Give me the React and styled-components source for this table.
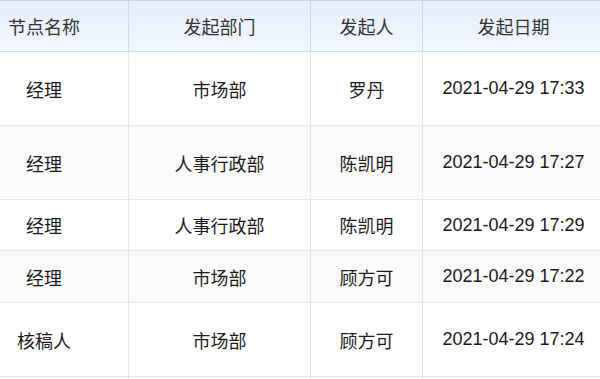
import React from 'react'
import styled, { createGlobalStyle } from 'styled-components'

const Global = createGlobalStyle`
  html, body {
    margin: 0;
    padding: 0;
    background: #fff;
    overflow: hidden;
  }
  body {
    font-family: "Liberation Sans", "Noto Sans CJK SC", sans-serif;
  }
`

const Viewport = styled.div`
  width: 600px;
  height: 379px;
  overflow: hidden;
`

const Grid = styled.div`
  display: grid;
  grid-template-columns: 169px 182px 112px 182px 160px;
  width: max-content;
  margin-left: -40px;
  border-top: 1px solid #c4d7ee;
`

const Head = styled.div`
  box-sizing: border-box;
  height: 51px;
  display: flex;
  align-items: center;
  justify-content: center;
  background: linear-gradient(to bottom, #e5eefb, #f2f7fe);
  border-right: 1px solid #c6dcf1;
  border-bottom: 1px solid #c6dcf1;
  color: #333;
  font-size: 18px;
`

const Cell = styled.div`
  box-sizing: border-box;
  height: ${p => p.h}px;
  display: flex;
  align-items: center;
  justify-content: center;
  background: ${p => (p.striped ? '#fafafa' : '#fff')};
  border-right: 1px solid #e6e6e6;
  border-bottom: 1px solid #e6e6e6;
  color: #1a1a1a;
  font-size: 18px;
  white-space: nowrap;
`

const columns = ['节点名称', '发起部门', '发起人', '发起日期', '']

const rows = [
  { h: 74, node: '经理', dept: '市场部', user: '罗丹', date: '2021-04-29 17:33' },
  { h: 74, node: '经理', dept: '人事行政部', user: '陈凯明', date: '2021-04-29 17:27' },
  { h: 51, node: '经理', dept: '人事行政部', user: '陈凯明', date: '2021-04-29 17:29' },
  { h: 52, node: '经理', dept: '市场部', user: '顾方可', date: '2021-04-29 17:22' },
  { h: 74, node: '核稿人', dept: '市场部', user: '顾方可', date: '2021-04-29 17:24' },
  { h: 60, node: '', dept: '', user: '', date: '' },
]

export default function App() {
  return (
    <Viewport>
      <Global />
      <Grid>
        {columns.map((c, i) => (
          <Head key={i}>{c}</Head>
        ))}
        {rows.map((r, i) => (
          <React.Fragment key={i}>
            <Cell h={r.h} striped={i % 2 === 1}>{r.node}</Cell>
            <Cell h={r.h} striped={i % 2 === 1}>{r.dept}</Cell>
            <Cell h={r.h} striped={i % 2 === 1}>{r.user}</Cell>
            <Cell h={r.h} striped={i % 2 === 1}>{r.date}</Cell>
            <Cell h={r.h} striped={i % 2 === 1}></Cell>
          </React.Fragment>
        ))}
      </Grid>
    </Viewport>
  )
}
